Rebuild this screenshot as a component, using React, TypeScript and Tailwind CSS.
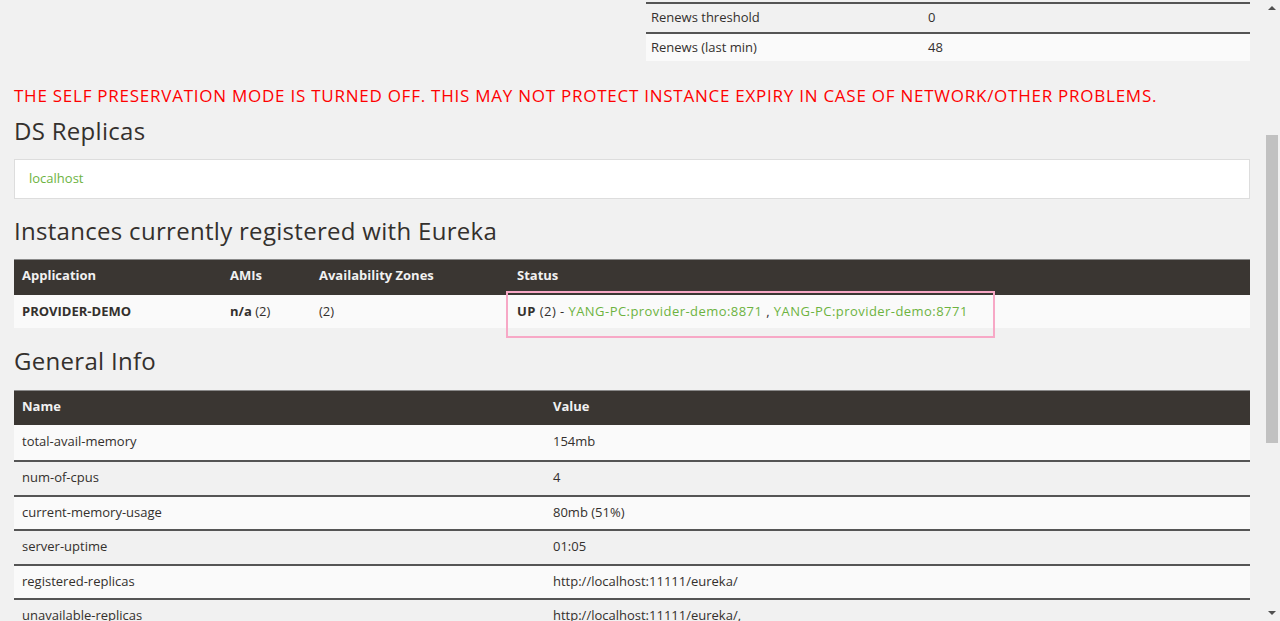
import React from "react";

const info: [string, string, string][] = [
  ["total-avail-memory", "154mb", "h-[35px]"],
  ["num-of-cpus", "4", "h-[35px]"],
  ["current-memory-usage", "80mb (51%)", "h-[34px]"],
  ["server-uptime", "01:05", "h-[35px]"],
  ["registered-replicas", "http://localhost:11111/eureka/", "h-[34px]"],
  ["unavailable-replicas", "http://localhost:11111/eureka/,", "h-[35px]"],
];

export default function App() {
  return (
    <div
      className="flex h-[621px] w-[1280px] overflow-hidden bg-[#f1f1f1] text-[#34302d]"
      style={{ fontFamily: '"Open Sans", "Liberation Sans", sans-serif' }}
    >
      <div className="w-[1263px] shrink-0 pl-[14px] pr-[13px]">
        {/* top stats table (right column) */}
        <div className="grid grid-cols-2 gap-x-[28px] pt-[2px]">
          <div />
          <div className="text-[13px] leading-[16px]">
            <div className="flex h-[30px] items-start border-t-2 border-[#555] bg-[#f1f1f1] pt-[5px]">
              <div className="w-[282px] pl-[5px]">Renews threshold</div>
              <div>0</div>
            </div>
            <div className="flex h-[29px] items-start border-t-2 border-[#555] bg-[#fafafa] pt-[5px]">
              <div className="w-[282px] pl-[5px]">Renews (last min)</div>
              <div>48</div>
            </div>
          </div>
        </div>

        <div className="mt-[24px] h-[22px] whitespace-nowrap text-[17px] leading-[22px] tracking-[0.75px] text-[#ff0000]">
          THE SELF PRESERVATION MODE IS TURNED OFF. THIS MAY NOT PROTECT INSTANCE EXPIRY IN CASE OF NETWORK/OTHER PROBLEMS.
        </div>

        <h2 className="mt-[9px] h-[30px] text-[24px] font-medium leading-[30px] tracking-[0.3px]">DS Replicas</h2>

        <div className="mt-[13px] flex h-[40px] items-center border border-[#dddddd] bg-white pl-[14px] text-[13px] text-[#6db33f]">
          localhost
        </div>

        <h2 className="mt-[17px] h-[30px] text-[24px] font-medium leading-[30px] tracking-[0.3px]">
          Instances currently registered with Eureka
        </h2>

        <div className="mt-[13px] text-[13px] leading-[16px]">
          <div className="flex h-[36px] items-start border-t border-[#8a8a8a] bg-[#3a3632] pt-[7px] font-bold text-[#f1f1f1]">
            <div className="w-[216px] pl-[8px]">Application</div>
            <div className="w-[89px]">AMIs</div>
            <div className="w-[190px]">Availability Zones</div>
            <div className="pl-[8px]">Status</div>
          </div>
          <div className="flex h-[33px] items-start bg-[#fafafa] pt-[8px]">
            <div className="w-[216px] pl-[8px] font-bold">PROVIDER-DEMO</div>
            <div className="w-[89px]">
              <b>n/a</b> (2)
            </div>
            <div className="w-[190px]">(2)</div>
            <div className="relative pl-[8px] tracking-[0.45px]">
              <b>UP</b> (2) -{" "}
              <span className="text-[#6db33f]">YANG-PC:provider-demo:8871</span> ,{" "}
              <span className="text-[#6db33f]">YANG-PC:provider-demo:8771</span>
              <div className="absolute left-[-3px] top-[-12px] h-[47px] w-[489px] border-2 border-[#f7a8c6]" />
            </div>
          </div>
        </div>

        <h2 className="mt-[18px] h-[30px] text-[24px] font-medium leading-[30px] tracking-[0.3px]">General Info</h2>

        <div className="mt-[14px] text-[13px] leading-[16px]">
          <div className="flex h-[35px] items-start border-t border-[#8a8a8a] bg-[#3a3632] pt-[7px] font-bold text-[#f1f1f1]">
            <div className="w-[531px] pl-[8px]">Name</div>
            <div className="pl-[8px]">Value</div>
          </div>
          {info.map(([k, v, h], i) => (
            <div
              key={k}
              className={`flex ${h} items-start ${i === 0 ? "pt-[8px]" : "border-t-2 border-[#555] pt-[7px]"} ${
                i % 2 === 0 ? "bg-[#fafafa]" : "bg-[#f1f1f1]"
              }`}
            >
              <div className="w-[531px] pl-[8px]">{k}</div>
              <div className="pl-[8px]">{v}</div>
            </div>
          ))}
        </div>
      </div>

      {/* scrollbar */}
      <div className="relative w-[17px] shrink-0 bg-[#f1f1f1]">
        <div className="absolute left-[5px] top-[6px] h-0 w-0 border-x-[4px] border-b-[4px] border-x-transparent border-b-[#505050]" />
        <div className="absolute left-[3px] top-[135px] h-[308px] w-[12px] bg-[#c1c1c1]" />
        <div className="absolute bottom-[6px] left-[5px] h-0 w-0 border-x-[4px] border-t-[4px] border-x-transparent border-t-[#505050]" />
      </div>
    </div>
  );
}
